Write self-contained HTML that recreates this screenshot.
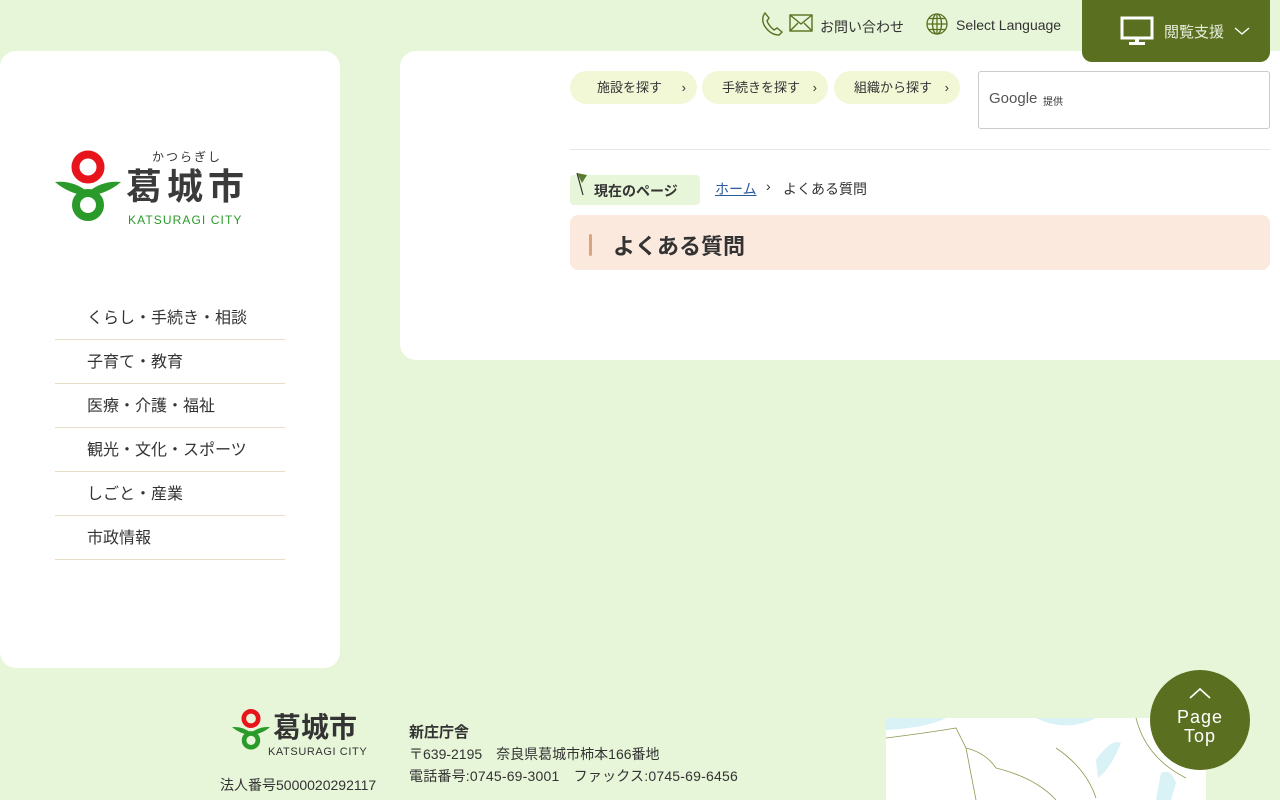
<!DOCTYPE html>
<html><head><meta charset="utf-8"><style>
*{margin:0;padding:0;box-sizing:border-box}
body{width:1280px;height:800px;overflow:hidden;background:#e7f5d8;font-family:"Liberation Sans","Noto Sans CJK JP",sans-serif;color:#333;position:relative}
.abs{position:absolute}
.side{left:0;top:51px;width:340px;height:617px;background:#fff;border-radius:16px}
.main{left:400px;top:51px;width:900px;height:309px;background:#fff;border-radius:16px 0 0 16px}
.nav{left:55px;top:296px;width:230px}
.nav div{height:44px;line-height:46px;border-bottom:1px solid #e6dcc8;padding-left:32px;font-size:16px;color:#333}
.pill{top:71px;height:33px;background:#f2f7d6;border-radius:17px;font-size:13px;line-height:33px;padding-left:27px;color:#333}
.pill span{position:absolute;right:11px;top:0;font-size:13px}
.vb{left:1082px;top:0;width:188px;height:62px;background:#5a7020;border-radius:0 0 10px 10px;color:#fff}
</style></head><body>
<div class="abs side"></div>
<div class="abs main"></div>

<svg class="abs" style="left:760px;top:11px" width="24" height="26" viewBox="0 0 24 26"><path d="M5 2 L9 7 L7 10 Q9 15 14 19 L17 17 L22 21 L19 24 Q10 24 4 14 Q1 7 5 2Z" fill="none" stroke="#5a7020" stroke-width="1.4"/></svg>
<svg class="abs" style="left:789px;top:14px" width="24" height="18"><rect x="1" y="1" width="22" height="16" fill="none" stroke="#5a7020" stroke-width="1.4"/><path d="M1 1 L12 10 L23 1 M1 17 L9 9 M23 17 L15 9" fill="none" stroke="#5a7020" stroke-width="1.4"/></svg>
<div class="abs" style="left:820px;top:17px;font-size:14px">お問い合わせ</div>
<svg class="abs" style="left:926px;top:13px" width="22" height="22" viewBox="0 0 22 22" fill="none" stroke="#5a7020" stroke-width="1.3"><circle cx="11" cy="11" r="10"/><ellipse cx="11" cy="11" rx="4.5" ry="10"/><path d="M11 1v20M1 11h20M3 5.5h16M3 16.5h16"/></svg>
<div class="abs" style="left:956px;top:17px;font-size:14px">Select Language</div>
<div class="abs vb">
<svg class="abs" style="left:38px;top:16px" width="34" height="30"><rect x="2" y="2" width="30" height="20" fill="none" stroke="#fff" stroke-width="3"/><rect x="15" y="22" width="4" height="5" fill="#fff"/><rect x="9" y="26" width="16" height="3" fill="#fff"/></svg>
<div class="abs" style="left:82px;top:21px;font-size:15px;font-weight:normal;color:#e8eedd">閲覧支援</div>
<svg class="abs" style="left:152px;top:26px" width="16" height="10"><path d="M1 2 L8 8 L15 2" fill="none" stroke="#fff" stroke-width="1.4"/></svg>
</div>

<svg class="abs" style="left:55px;top:150px" width="66" height="74" viewBox="0 0 66 74">
<circle cx="33" cy="17" r="12.5" fill="none" stroke="#e8141b" stroke-width="8"/>
<path d="M0 32 Q18 30 33 42 Q48 30 66 32 Q52 44 33 46 Q14 44 0 32Z" fill="#2a9a2a"/>
<circle cx="33" cy="55" r="12" fill="none" stroke="#2a9a2a" stroke-width="8"/>
</svg>
<div class="abs" style="left:152px;top:148px;font-size:12px;letter-spacing:2px;color:#333">かつらぎし</div>
<div class="abs" style="left:126px;top:166px;font-size:36px;font-weight:bold;letter-spacing:5px;color:#3a3a3a;line-height:42px">葛城市</div>
<div class="abs" style="left:128px;top:213px;font-size:12px;letter-spacing:1.1px;color:#2a9a2a">KATSURAGI CITY</div>

<div class="abs nav"><div>くらし・手続き・相談</div><div>子育て・教育</div><div>医療・介護・福祉</div><div>観光・文化・スポーツ</div><div>しごと・産業</div><div>市政情報</div></div>

<div class="abs pill" style="left:570px;width:127px">施設を探す<span>›</span></div>
<div class="abs pill" style="left:702px;width:126px;padding-left:20px">手続きを探す<span>›</span></div>
<div class="abs pill" style="left:834px;width:126px;padding-left:20px">組織から探す<span>›</span></div>
<div class="abs" style="left:978px;top:71px;width:292px;height:58px;border:1px solid #ccc;border-radius:3px"><span class="abs" style="left:10px;top:18px;font-size:15px;color:#555">Google</span><span class="abs" style="left:64px;top:21px;font-size:10px;color:#333">提供</span></div>
<div class="abs" style="left:570px;top:149px;width:700px;height:1px;background:#e6e6e6"></div>

<div class="abs" style="left:570px;top:175px;width:130px;height:30px;background:#e7f5d8;border-radius:4px"></div>
<svg class="abs" style="left:574px;top:171px" width="16" height="26"><path d="M3 2 L9 24" stroke="#333" stroke-width="1.2"/><path d="M3 2 L13 4 L8 12Z" fill="#5a7a30"/></svg>
<div class="abs" style="left:594px;top:181px;font-size:14px;font-weight:bold">現在のページ</div>
<div class="abs" style="left:715px;top:179px;font-size:14px;color:#2a5a9a;text-decoration:underline">ホーム</div>
<div class="abs" style="left:766px;top:178px;font-size:14px">›</div>
<div class="abs" style="left:783px;top:179px;font-size:14px">よくある質問</div>

<div class="abs" style="left:570px;top:215px;width:700px;height:55px;background:#fbe9de;border-radius:8px"></div>
<div class="abs" style="left:589px;top:234px;width:3px;height:22px;background:#dba47f;border-radius:2px"></div>
<div class="abs" style="left:613px;top:229px;font-size:22px;font-weight:bold;color:#333">よくある質問</div>

<svg class="abs" style="left:232px;top:708px" width="38" height="44" viewBox="0 0 66 74">
<circle cx="33" cy="17" r="12.5" fill="none" stroke="#e8141b" stroke-width="8"/>
<path d="M0 32 Q18 30 33 42 Q48 30 66 32 Q52 44 33 46 Q14 44 0 32Z" fill="#2a9a2a"/>
<circle cx="33" cy="55" r="12" fill="none" stroke="#2a9a2a" stroke-width="8"/>
</svg>
<div class="abs" style="left:273px;top:711px;font-size:28px;font-weight:bold;color:#333;line-height:34px">葛城市</div>
<div class="abs" style="left:268px;top:746px;font-size:11px;color:#333;letter-spacing:.6px">KATSURAGI CITY</div>
<div class="abs" style="left:220px;top:775px;font-size:14px">法人番号5000020292117</div>
<div class="abs" style="left:409px;top:721px;font-size:15px;font-weight:bold">新庄庁舎</div>
<div class="abs" style="left:409px;top:744px;font-size:14px">〒639-2195　奈良県葛城市柿本166番地</div>
<div class="abs" style="left:409px;top:766px;font-size:14px;letter-spacing:.2px">電話番号:0745-69-3001　ファックス:0745-69-6456</div>

<div class="abs" style="left:886px;top:718px;width:320px;height:82px;background:#fff;overflow:hidden">
<svg width="320" height="82"><path d="M0 0 H60 Q40 10 0 12Z" fill="#d8f2f5"/><path d="M150 0 Q180 15 210 0Z" fill="#d8f2f5"/><path d="M210 42 Q225 20 235 25 Q225 50 212 60Z" fill="#d8f2f5"/><path d="M275 55 Q285 50 290 65 L285 82 L270 82Z" fill="#d8f2f5"/><path d="M0 20 Q40 15 70 10 L80 30 Q100 35 110 50 M80 30 L90 82 M110 50 Q150 60 170 82 M170 30 Q200 50 210 80 M250 0 Q260 40 300 60" fill="none" stroke="#8a9a50" stroke-width=".8"/></svg></div>

<div class="abs" style="left:1150px;top:670px;width:100px;height:100px;border-radius:50%;background:#5a7020;color:#fff;text-align:center">
<svg class="abs" style="left:39px;top:17px" width="22" height="12"><path d="M1 11 L11 2 L21 11" fill="none" stroke="#fff" stroke-width="1.6"/></svg>
<div class="abs" style="left:0;top:38px;width:100px;font-size:18px;font-weight:normal;line-height:19px;letter-spacing:1px">Page<br>Top</div></div>
</body></html>
